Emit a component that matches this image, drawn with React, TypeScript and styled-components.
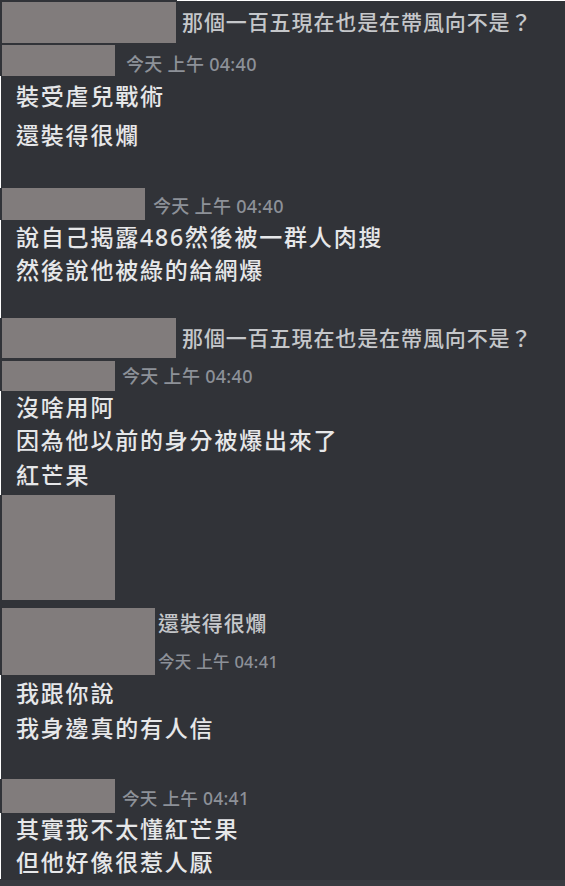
import React from 'react';
import styled, { createGlobalStyle } from 'styled-components';

const GlobalStyle = createGlobalStyle`
  html, body {
    margin: 0;
    padding: 0;
    background: #313338;
  }
  * {
    box-sizing: border-box;
  }
`;

const CJK = `"Noto Sans", "Noto Sans CJK TC", sans-serif`;

type BoxProps = { $w: number; $h: number };

const Page = styled.div`
  width: 565px;
  height: 886px;
  overflow: hidden;
  background: #313338;
  display: flex;
  flex-direction: column;
  font-family: ${CJK};
`;

const Seam = styled.div`
  height: 1px;
  margin-left: 177px;
  background: #ffffff;
`;

const Redact = styled.div<BoxProps>`
  flex: none;
  width: ${({ $w }) => $w}px;
  height: ${({ $h }) => $h}px;
  margin-left: 2px;
  background: #817c7c;
`;

const ReplyRow = styled.div<{ $top: number; $gap: number }>`
  display: flex;
  align-items: center;
  gap: ${({ $gap }) => $gap}px;
  margin-top: ${({ $top }) => $top}px;
`;

const ReplyText = styled.span`
  font-size: 21px;
  font-weight: 500;
  line-height: 30px;
  letter-spacing: 0.9px;
  color: #c5c7ca;
  white-space: nowrap;
`;

const AuthorRow = styled.div<{ $top: number; $gap: number; $align: string }>`
  display: flex;
  align-items: ${({ $align }) => $align};
  gap: ${({ $gap }) => $gap}px;
  margin-top: ${({ $top }) => $top}px;
`;

const Time = styled.span<{ $lh: number; $size?: number }>`
  font-size: ${({ $size }) => $size ?? 18}px;
  font-weight: 500;
  line-height: ${({ $lh }) => $lh}px;
  letter-spacing: 0.3px;
  color: #8d9198;
  white-space: nowrap;
`;

const Body = styled.div<{ $top: number; $bottom: number }>`
  display: flex;
  flex-direction: column;
  padding: ${({ $top }) => $top}px 0 ${({ $bottom }) => $bottom}px 15px;
  border-left: 1px solid #ffffff;
`;

const Line = styled.div<{ $gap?: number }>`
  margin-top: ${({ $gap }) => $gap ?? 0}px;
  font-size: 23px;
  font-weight: 500;
  line-height: 33px;
  letter-spacing: 1.8px;
  color: #e6e7e9;
  white-space: nowrap;
`;

const QuoteBlock = styled.div`
  display: flex;
  gap: 3px;
  margin-top: 8px;
`;

const QuoteColumn = styled.div`
  display: flex;
  flex-direction: column;
  justify-content: space-between;
`;

const Footer = styled.div`
  margin-top: 1px;
  height: 7px;
  background: #393b41;
`;

const QUESTION = '那個一百五現在也是在帶風向不是？';

export default function App() {
  return (
    <>
      <GlobalStyle />
      <Page>
        <Seam />

        <ReplyRow $top={1} $gap={6}>
          <Redact $w={174} $h={41} />
          <ReplyText>{QUESTION}</ReplyText>
        </ReplyRow>
        <AuthorRow $top={2} $gap={11} $align='flex-end'>
          <Redact $w={113} $h={31} />
          <Time $lh={24}>今天 上午 04:40</Time>
        </AuthorRow>
        <Body $top={4} $bottom={36}>
          <Line>裝受虐兒戰術</Line>
          <Line $gap={6}>還裝得很爛</Line>
        </Body>

        <AuthorRow $top={0} $gap={8} $align='flex-end'>
          <Redact $w={143} $h={32} />
          <Time $lh={28}>今天 上午 04:40</Time>
        </AuthorRow>
        <Body $top={1} $bottom={31}>
          <Line>說自己揭露486然後被一群人肉搜</Line>
          <Line>然後說他被綠的給網爆</Line>
        </Body>

        <ReplyRow $top={0} $gap={6}>
          <Redact $w={174} $h={40} />
          <ReplyText>{QUESTION}</ReplyText>
        </ReplyRow>
        <AuthorRow $top={3} $gap={7} $align='center'>
          <Redact $w={113} $h={30} />
          <Time $lh={24}>今天 上午 04:40</Time>
        </AuthorRow>
        <Body $top={0} $bottom={3}>
          <Line>沒啥用阿</Line>
          <Line>因為他以前的身分被爆出來了</Line>
          <Line $gap={2}>紅芒果</Line>
        </Body>

        <Redact $w={113} $h={105} />

        <QuoteBlock>
          <Redact $w={153} $h={67} />
          <QuoteColumn>
            <ReplyText>還裝得很爛</ReplyText>
            <Time $lh={26} $size={16.5}>今天 上午 04:41</Time>
          </QuoteColumn>
        </QuoteBlock>
        <Body $top={2} $bottom={34}>
          <Line>我跟你說</Line>
          <Line $gap={2}>我身邊真的有人信</Line>
        </Body>

        <AuthorRow $top={0} $gap={7} $align='flex-end'>
          <Redact $w={113} $h={34} />
          <Time $lh={30} $size={17.5}>今天 上午 04:41</Time>
        </AuthorRow>
        <Body $top={0} $bottom={0}>
          <Line>其實我不太懂紅芒果</Line>
          <Line>但他好像很惹人厭</Line>
        </Body>

        <Footer />
      </Page>
    </>
  );
}
